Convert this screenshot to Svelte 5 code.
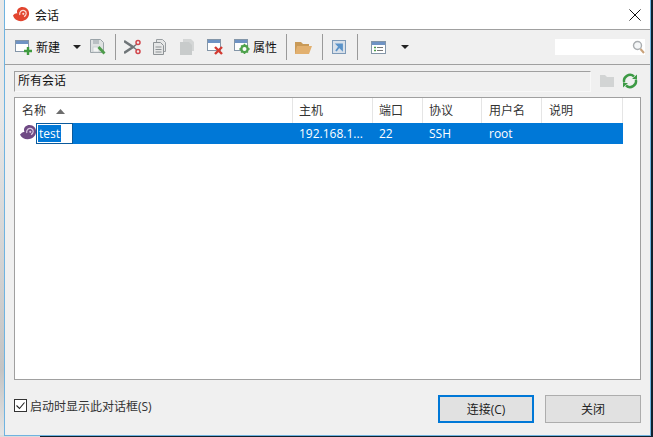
<script>
  const columns = [
    { name: '名称', value: '', width: 278 },
    { name: '主机', value: '192.168.1...', width: 80 },
    { name: '端口', value: '22', width: 50 },
    { name: '协议', value: 'SSH', width: 59 },
    { name: '用户名', value: 'root', width: 60 },
    { name: '说明', value: '', width: 81 }
  ];
</script>

<div class="desktop">
  <div class="edge"></div>
  <div class="window">
    <div class="titlebar">
      <svg class="logo" width="17" height="15" viewBox="0 0 17 15">
        <path d="M0 8.500C2 15 10.500 16 14.500 11C18 6.500 15.500 0 9.500 0C5 0 3 4 4.500 6.500C3 6 1.500 7 0 8.500Z" fill="#e2452f"/>
        <path d="M6.800 8C6 4.800 8.800 2.800 11.300 3.600C14 4.600 13.800 8.500 11 9.600" fill="none" stroke="#fbdcd4" stroke-width="1.200"/>
        <circle cx="10.300" cy="6.800" r="1.100" fill="#fbdcd4"/>
      </svg>
      <span class="title">会话</span>
      <svg class="close" width="12" height="12" viewBox="0 0 12 12"><path d="M.5.5l11 11M11.500.5l-11 11" stroke="#111" stroke-width="1" fill="none"/></svg>
    </div>

    <div class="toolbar">
      <svg class="ic first" width="18" height="17" viewBox="0 0 18 17">
        <rect x=".5" y="1.500" width="13" height="11" fill="#fff" stroke="#8496a8"/><rect x="1" y="2" width="12" height="3" fill="#6f93c4"/>
        <path d="M13 8v8M9 12h8" stroke="#3f9b3f" stroke-width="2.400"/>
      </svg>
      <span class="label">新建</span>
      <svg class="caret" width="8" height="4" viewBox="0 0 8 4"><path d="M0 0h8L4 4z" fill="#222"/></svg>
      <svg class="ic save" width="16" height="16" viewBox="0 0 16 16">
        <path d="M.5.5h10l3 3v10H.5z" fill="#dfe2e2" stroke="#9aa3a8"/><rect x="3" y="1" width="6" height="4" fill="#b9c0c3"/><rect x="3" y="8" width="6" height="5" fill="#f3f4f4" stroke="#b9c0c3" stroke-width=".6"/>
        <path d="M8.500 8l6 6.500" stroke="#4d9c4a" stroke-width="2.800"/>
      </svg>
      <i class="sep"></i>
      <svg class="ic" width="17" height="16" viewBox="0 0 17 16">
        <path d="M0 2l9 6-9 6" fill="none" stroke="#6f7578" stroke-width="2.600"/>
        <path d="M9 8l4-3M9 8l4 3" stroke="#6f7578" stroke-width="1.500"/>
        <circle cx="14" cy="3.500" r="2" fill="none" stroke="#d1454b" stroke-width="1.500"/><circle cx="14" cy="12.500" r="2" fill="none" stroke="#d1454b" stroke-width="1.500"/>
      </svg>
      <svg class="ic copy" width="13" height="16" viewBox="0 0 13 16">
        <path d="M3.500.5h6l3 3v9h-9z" fill="#e6e7e7" stroke="#9a9fa2"/><path d="M.5 3.500h7l3 3v9h-10z" fill="#e6e7e7" stroke="#8e9396"/><path d="M2.500 8h6M2.500 10.500h6M2.500 13h6" stroke="#8e9396"/>
      </svg>
      <svg class="ic paste" width="14" height="16" viewBox="0 0 14 16">
        <path d="M3 0h8l3 3v9H3z" fill="#d4d6d6"/><path d="M0 3h9l3 3v10H0z" fill="#c8cbcb"/>
      </svg>
      <svg class="ic del" width="16" height="16" viewBox="0 0 16 16">
        <rect x=".5" y=".5" width="13" height="11" fill="#fff" stroke="#8496a8"/><rect x="1" y="1" width="12" height="3" fill="#6f93c4"/>
        <path d="M8 8l7 7M15 8l-7 7" stroke="#d33a32" stroke-width="2.400"/>
      </svg>
      <svg class="ic prop" width="17" height="16" viewBox="0 0 17 16">
        <rect x=".5" y=".5" width="13" height="11" fill="#fff" stroke="#8496a8"/><rect x="1" y="1" width="12" height="3" fill="#6f93c4"/>
        <circle cx="10.500" cy="10" r="3.200" fill="#fff" stroke="#4fa24c" stroke-width="2.400"/>
        <path d="M10.500 4.800v2M10.500 13v2M5.300 10h2M13.700 10h2M7 6.500l1 1M13 12.500l1 1M14 6.500l-1 1M8 12.500l-1 1" stroke="#4fa24c" stroke-width="1.300"/>
      </svg>
      <span class="label l2">属性</span>
      <i class="sep s2"></i>
      <svg class="ic" width="17" height="13" viewBox="0 0 17 13">
        <path d="M0 1h6l2 2h6v10H0z" fill="#c99a58"/><path d="M2 5h15l-3 8H0z" fill="#e2b06f"/>
      </svg>
      <i class="sep s3"></i>
      <svg class="ic" width="14" height="14" viewBox="0 0 14 14">
        <rect x=".5" y=".5" width="13" height="13" fill="#d9e1ea" stroke="#7d9ab8"/>
        <path d="M4 11l4-5.500M5 4.500h5v5z" stroke="#5b93c9" fill="#5b93c9" stroke-width="1.800"/>
      </svg>
      <i class="sep s4"></i>
      <svg class="ic" width="15" height="13" viewBox="0 0 15 13">
        <rect x=".5" y=".5" width="14" height="12" fill="#fff" stroke="#8496a8"/><rect x="1" y="1" width="13" height="3" fill="#6f93c4"/>
        <path d="M3 6.500h2M3 9.500h2" stroke="#4d9c4a" stroke-width="1.500"/><path d="M6 6.500h6M6 9.500h6" stroke="#777"/>
      </svg>
      <svg class="caret c2" width="8" height="4" viewBox="0 0 8 4"><path d="M0 0h8L4 4z" fill="#222"/></svg>
      <div class="search">
        <svg width="13" height="14" viewBox="0 0 13 14">
          <circle cx="5.500" cy="5.500" r="4" fill="#f4f6f7" stroke="#a9adb0" stroke-width="1.400"/><path d="M8.500 9l3.500 4" stroke="#c9a27a" stroke-width="2"/>
        </svg>
      </div>
    </div>

    <div class="pathrow">
      <div class="path">所有会话</div>
      <svg class="folder" width="14" height="12" viewBox="0 0 14 12"><path d="M0 0h5l2 2h7v10H0z" fill="#d2d4d4"/></svg>
      <svg class="refresh" width="16" height="16" viewBox="0 0 16 16">
        <path d="M2.200 9.500A6 6 0 0 1 12 3.500M13.800 6.500A6 6 0 0 1 4 12.500" fill="none" stroke="#3d9a45" stroke-width="2.400"/>
        <path d="M10 6h5V1.500zM6 10H1v4.500z" fill="#3d9a45"/>
      </svg>
    </div>

    <div class="list">
      <div class="head">
        {#each columns as col, i}
          <div class="hcell" style="width: {col.width}px">
            {col.name}
            {#if i == 0}
              <svg class="sort" width="9" height="5" viewBox="0 0 9 5"><path d="M0 5h9L4.500 0z" fill="#6d6d6d"/></svg>
            {/if}
          </div>
        {/each}
      </div>
      <div class="row">
        {#each columns as col, i}
          <div class="cell" style="width: {col.width}px">
            {#if i == 0}
              <span class="iconbox">
                <svg width="17" height="15" viewBox="0 0 17 15">
                  <path d="M0 9.500C2 15 10.500 16 14.500 11C18 6.500 15.500 0 9.500 0C5 0 3 4 4.500 7C3 6.500 1.500 8 0 9.500Z" fill="#6f4a84"/>
                  <path d="M6.800 8C6 4.800 8.800 2.800 11.300 3.600C14 4.600 13.800 8.500 11 9.600" fill="none" stroke="#d9c9e0" stroke-width="1.200"/>
                  <circle cx="10.300" cy="6.800" r="1.100" fill="#d9c9e0"/>
                </svg>
              </span>
              <span class="edit"><span class="sel">test</span></span>
            {:else}
              {col.value}
            {/if}
          </div>
        {/each}
      </div>
    </div>

    <div class="footer">
      <label class="check">
        <svg width="13" height="13" viewBox="0 0 13 13">
          <rect x=".5" y=".5" width="12" height="12" fill="#fff" stroke="#333"/>
          <path d="M2.500 6.500l3 3 5-6" fill="none" stroke="#222" stroke-width="1.100"/>
        </svg>
        启动时显示此对话框(S)
      </label>
      <button class="btn primary">连接(C)</button>
      <button class="btn">关闭</button>
    </div>
  </div>
</div>

<style>
  :global(body) {
    margin: 0;
  }
  .desktop {
    display: flex;
    width: 653px;
    height: 437px;
    overflow: hidden;
    background: linear-gradient(to right, #dcdcdc 40px, #10212e 40px);
    font-family: "Open Sans", "Noto Sans CJK SC", sans-serif;
    font-size: 12px;
    color: #222;
  }
  .edge {
    width: 4px;
    height: 435px;
    background: linear-gradient(#e8e8e8 0 25%, #c4c4c4 85%, #e4e4e4);
    flex: none;
  }
  .window {
    width: 647px;
    height: 436px;
    flex: none;
    display: flex;
    flex-direction: column;
    box-sizing: border-box;
    background: #f0f0f0;
    border: 1px solid #6fb3e0;
    border-top: none;
  }
  .titlebar {
    height: 29px;
    flex: none;
    display: flex;
    align-items: center;
    background: #fff;
    border-bottom: 1px solid #a0a0a0;
  }
  .logo {
    margin-left: 8px;
  }
  .title {
    margin-left: 5px;
    color: #111;
  }
  .close {
    margin-left: auto;
    margin-right: 9px;
  }
  .toolbar {
    height: 34px;
    flex: none;
    display: flex;
    align-items: center;
    border-bottom: 1px solid #a0a0a0;
  }
  .ic {
    flex: none;
  }
  .first {
    margin-left: 10px;
  }
  .label {
    margin-left: 3px;
    color: #111;
  }
  .l2 {
    margin-left: 2px;
  }
  .caret {
    margin-left: 13px;
    flex: none;
  }
  .save {
    margin-left: 9px;
  }
  .sep {
    display: block;
    width: 1px;
    height: 26px;
    background: #9a9a9a;
    margin: 0 8px 0 9px;
    flex: none;
  }
  .copy {
    margin-left: 12px;
  }
  .paste {
    margin-left: 14px;
  }
  .del {
    margin-left: 13px;
  }
  .prop {
    margin-left: 11px;
  }
  .s2 {
    margin-left: 9px;
  }
  .s3 {
    margin-left: 10px;
    margin-right: 9px;
  }
  .s4 {
    margin-left: 11px;
    margin-right: 13px;
  }
  .c2 {
    margin-left: 15px;
  }
  .search {
    margin-left: auto;
    margin-right: 5px;
    width: 90px;
    height: 16px;
    background: #fff;
    display: flex;
    justify-content: flex-end;
    align-items: center;
  }
  .pathrow {
    display: flex;
    align-items: center;
    margin: 5px 9px 0 9px;
    height: 22px;
    flex: none;
  }
  .path {
    width: 577px;
    height: 21px;
    box-sizing: border-box;
    border: 1px solid #a0a0a0;
    border-right-color: #f8f8f8;
    border-bottom-color: #f8f8f8;
    padding-left: 3px;
    line-height: 18px;
    color: #111;
  }
  .folder {
    margin-left: 9px;
  }
  .refresh {
    margin-left: 8px;
  }
  .list {
    margin: 5px 9px 0 9px;
    height: 283px;
    flex: none;
    box-sizing: border-box;
    background: #fff;
    border: 1px solid #a0a0a0;
  }
  .head {
    display: flex;
    height: 25px;
  }
  .hcell {
    box-sizing: border-box;
    padding-left: 7px;
    line-height: 25px;
    border-right: 1px solid #e5e5e5;
    color: #333;
    flex: none;
  }
  .hcell:nth-child(n+2):nth-child(-n+4),
  .cell:nth-child(n+2):nth-child(-n+4) {
    padding-left: 6px;
  }
  .sort {
    margin-left: 7px;
    vertical-align: 1px;
  }
  .row {
    display: flex;
    width: 608px;
    height: 21px;
    background: #0078d7;
    color: #fff;
  }
  .cell {
    box-sizing: border-box;
    padding-left: 7px;
    line-height: 21px;
    flex: none;
    display: flex;
    align-items: center;
  }
  .cell:first-child {
    padding-left: 0;
  }
  .iconbox {
    width: 21px;
    height: 21px;
    box-sizing: border-box;
    padding: 2px 0 0 5px;
    background: #fff;
    flex: none;
  }
  .iconbox svg {
    display: block;
  }
  .edit {
    display: flex;
    align-items: center;
    width: 37px;
    height: 21px;
    box-sizing: border-box;
    background: #fff;
    border: 1px solid #0b5a9c;
    padding-left: 1px;
  }
  .sel {
    background: #0078d7;
    color: #fff;
    line-height: 17px;
    padding: 0 1px;
  }
  .footer {
    flex: 1;
    display: flex;
    align-items: center;
    padding: 0 9px;
    color: #333;
  }
  .check {
    display: flex;
    align-items: center;
    gap: 3px;
    margin-right: auto;
    margin-bottom: 4px;
  }
  .btn {
    width: 96px;
    height: 28px;
    margin-left: 11px;
    margin-top: 3px;
    padding: 0;
    font: inherit;
    color: #222;
    background: #e1e1e1;
    border: 1px solid #adadad;
    box-sizing: border-box;
  }
  .primary {
    border: 2px solid #0078d7;
  }
</style>
